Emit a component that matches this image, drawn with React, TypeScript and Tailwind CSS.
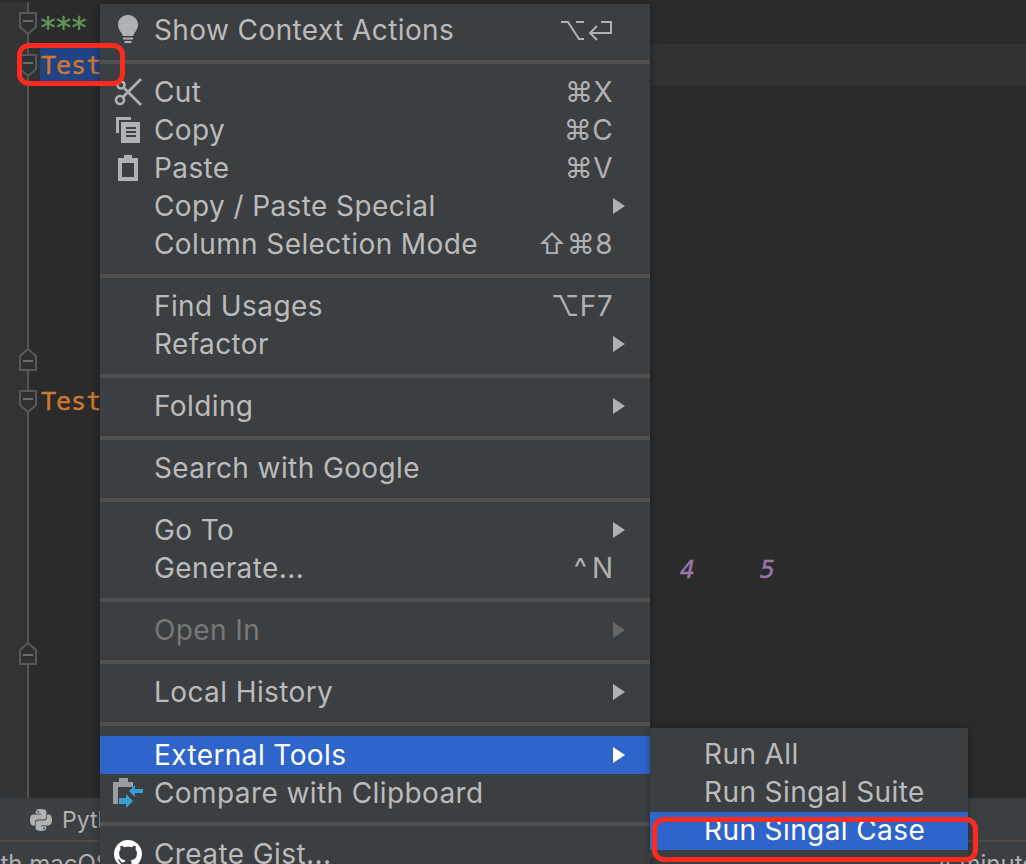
const sans = "font-['Inter','Noto_Sans',sans-serif]"

type Item = { label: string; icon?: React.ReactNode; shortcut?: React.ReactNode; sub?: boolean; active?: boolean; disabled?: boolean }

function Bulb() {
  return (
    <svg width="22" height="30" viewBox="0 0 22 30" fill="#afb1b3">
      <path d="M11 0C5 0 1 4.400 1 10c0 3.600 2 6 3.500 8 .8 1 1.200 2 1.200 3h10.600c0-1 .4-2 1.200-3 1.500-2 3.500-4.400 3.500-8C21 4.400 17 0 11 0z" />
      <rect x="6" y="22.500" width="10" height="2" />
      <rect x="7.500" y="26" width="7" height="2" />
    </svg>
  )
}

function Scissors() {
  return (
    <svg width="28" height="28" viewBox="0 0 28 28" fill="none" stroke="#afb1b3" strokeWidth="2.600">
      <circle cx="6" cy="22" r="4" />
      <circle cx="7" cy="7" r="3.500" />
      <path d="M9 19L27 1M10 10l17 17" />
    </svg>
  )
}

function CopyIcon() {
  return (
    <svg width="24" height="26" viewBox="0 0 24 26" fill="#afb1b3">
      <path d="M0 0h15v3H3v13H0z" />
      <path fillRule="evenodd" d="M5 5h19v21H5zM10 10v2h10v-2zM10 14v2h10v-2zM10 18v2h10v-2z" />
    </svg>
  )
}

function PasteIcon() {
  return (
    <svg width="20" height="26" viewBox="0 0 20 26" fill="#afb1b3">
      <path fillRule="evenodd" d="M0 3h6V0h8v3h6v23H0zM4 8v14h12V8z" />
    </svg>
  )
}

function CompareIcon() {
  return (
    <svg width="30" height="32" viewBox="0 0 30 32">
      <path fill="#9a9c9e" d="M0 5h6V1h9v4h5v5H5v17H0z" />
      <path fill="#389fd6" d="M30 12h-8V8l-6 6 6 6v-4h8z" />
      <path fill="#389fd6" d="M6 21h7v-4l7 7-7 7v-4H6z" />
    </svg>
  )
}

function Github() {
  return (
    <svg width="28" height="28" viewBox="0 0 16 16" fill="#ffffff">
      <path d="M8 0C3.580 0 0 3.580 0 8c0 3.540 2.290 6.530 5.470 7.590.4.070.55-.17.55-.38 0-.19-.01-.82-.01-1.490-2.010.37-2.530-.49-2.690-.94-.09-.23-.48-.94-.82-1.130-.28-.15-.68-.52-.01-.53.63-.01 1.080.58 1.230.82.720 1.210 1.870.870 2.330.660.070-.520.280-.870.510-1.070-1.780-.2-3.640-.890-3.640-3.950 0-.870.310-1.590.820-2.150-.080-.2-.360-1.020.080-2.120 0 0 .670-.210 2.200.820.640-.180 1.320-.270 2-.270s1.360.090 2 .270c1.530-1.040 2.200-.820 2.200-.820.440 1.100.160 1.920.080 2.120.510.560.820 1.270.820 2.150 0 3.070-1.870 3.750-3.650 3.950.290.250.540.730.540 1.480 0 1.070-.010 1.930-.010 2.200 0 .210.150.460.550.380A8.010 8.010 0 0016 8c0-4.420-3.580-8-8-8z" />
    </svg>
  )
}

function PythonIcon() {
  return (
    <svg width="22" height="22" viewBox="0 0 24 24" fill="#afb1b3">
      <path d="M11.900 0C6 0 6.300 2.600 6.300 2.600v2.700h5.700v.8H4S0 5.600 0 11.900c0 6.200 3.500 6 3.500 6h2v-2.900s-.1-3.500 3.400-3.500h5.700s3.300.1 3.300-3.200V3.200S18.400 0 11.900 0zM8.800 1.800a1 1 0 110 2.100 1 1 0 010-2.100z" />
      <path d="M12.100 24c5.900 0 5.600-2.600 5.600-2.600v-2.700H12v-.8h8s4 .5 4-5.800c0-6.200-3.500-6-3.500-6h-2v2.900s.1 3.500-3.400 3.500H9.400s-3.300-.1-3.300 3.200v5.100S5.600 24 12.100 24zm3.100-1.800a1 1 0 110-2.100 1 1 0 010 2.100z" />
    </svg>
  )
}

function OptionReturn() {
  return (
    <svg width="52" height="21" viewBox="0 0 52 21" fill="none" stroke="#afb1b3" strokeWidth="2">
      <path d="M0 2h7l11 17h5M15 2h8" />
      <path d="M40 2h10v11H29M36 6l-7 7 7 7" />
    </svg>
  )
}

function Arrow({ color = '#afb1b3' }: { color?: string }) {
  return (
    <svg width="12" height="16" viewBox="0 0 12 16" fill={color}>
      <path d="M0 0l12 8-12 8z" />
    </svg>
  )
}

function FoldMark({ up }: { up?: boolean }) {
  return (
    <svg width="18" height="23" viewBox="0 0 18 23" fill="#2f3032" stroke="#575859" strokeWidth="2" className="relative -mr-[10px]">
      {up ? <path d="M1 8l8-7 8 7v14H1z" /> : <path d="M1 1h16v14l-8 7-8-7z" />}
      <path d={up ? 'M4 13h10' : 'M4 9h10'} stroke="#6a6b6c" />
    </svg>
  )
}

function MenuRow({ label, icon, shortcut, sub, active, disabled }: Item) {
  const text = active ? 'text-white' : disabled ? 'text-[#777777]' : 'text-[#bbbbbb]'
  return (
    <div className={`flex h-[38px] items-center pr-[26px] ${active ? 'bg-[#2f65ca]' : ''} ${text}`}>
      <div className="flex w-[55px] shrink-0 justify-center pl-[1px]">{icon}</div>
      <span className="-ml-[1px] flex-1 whitespace-nowrap">{label}</span>
      {shortcut && <span className="mr-[11px] flex items-center whitespace-nowrap text-[#afb1b3]">{shortcut}</span>}
      {sub && (
        <span className="-mr-[1px]">
          <Arrow color={active ? '#ffffff' : disabled ? '#666666' : '#afb1b3'} />
        </span>
      )}
    </div>
  )
}

function Sep() {
  return <div className="mb-[9px] mt-[11px] h-[4px] bg-[#515151]" />
}

function EditorLine({ fold, current, children }: { fold?: 'up' | 'down'; current?: boolean; children?: React.ReactNode }) {
  return (
    <div className={`flex h-[42px] shrink-0 ${current ? 'bg-[#323232]' : ''}`}>
      <div className="flex w-[29px] shrink-0 items-center justify-end border-r-2 border-[#555555] bg-[#313335]">
        {fold && <FoldMark up={fold === 'up'} />}
      </div>
      <div className="flex flex-1 items-center pl-[11px] pt-[1px] font-['DejaVu_Sans_Mono',monospace] text-[25px] [-webkit-text-stroke:0.4px]">
        {children}
      </div>
    </div>
  )
}

export default function App() {
  const lines = Array.from({ length: 19 }, (_, i) => i + 1)
  return (
    <div className={`relative flex h-[864px] w-[1026px] flex-col overflow-hidden bg-[#2b2b2b] ${sans}`}>
      {/* Editor */}
      <div className="h-[798px] overflow-hidden pt-[2px]">
        {lines.map((n) => {
          if (n === 1)
            return (
              <EditorLine key={n} fold="down">
                <span className="-ml-[1px] translate-y-[4px] text-[30px] tracking-[-2.500px] text-[#629755]">***</span>
              </EditorLine>
            )
          if (n === 2)
            return (
              <EditorLine key={n} fold="down" current>
                <span className="bg-[#214283] px-[1px] text-[#cc7832]">Test</span>
              </EditorLine>
            )
          if (n === 9) return <EditorLine key={n} fold="up" />
          if (n === 10)
            return (
              <EditorLine key={n} fold="down">
                <span className="px-[1px] text-[#cc7832]">Test</span>
              </EditorLine>
            )
          if (n === 14)
            return (
              <EditorLine key={n}>
                <span className="ml-[640px] italic text-[#9876aa]">4</span>
                <span className="ml-[65px] italic text-[#9876aa]">5</span>
              </EditorLine>
            )
          if (n === 16) return <EditorLine key={n} fold="up" />
          return <EditorLine key={n} />
        })}
      </div>

      {/* Tool window bar */}
      <div className="flex h-[44px] shrink-0 items-center border-b-2 border-[#4d4a48] bg-[#3c3f41] pl-[30px] pt-[2px] text-[23px] text-[#afb1b3]">
        <PythonIcon />
        <span className="ml-[10px]">Python Console</span>
      </div>

      {/* Status bar */}
      <div className="flex flex-1 items-start overflow-hidden whitespace-nowrap bg-[#3c3f41] pt-[9px] text-[24px] leading-[26px] text-[#afb1b3]">
        <span className="-ml-[25px]">with macOS</span>
        <span className="ml-[826px]">4 minutes ago</span>
      </div>

      {/* Context menu */}
      <div className="absolute left-[100px] top-[4px] w-[550px] bg-[#3c3f41] pt-[7px] text-[28px] leading-[32px] tracking-[0.400px] shadow-[0_0_8px_rgba(0,0,0,0.35)]">
        <MenuRow label="Show Context Actions" icon={<Bulb />} shortcut={<OptionReturn />} />
        <Sep />
        <MenuRow label="Cut" icon={<Scissors />} shortcut="⌘X" />
        <MenuRow label="Copy" icon={<CopyIcon />} shortcut="⌘C" />
        <MenuRow label="Paste" icon={<PasteIcon />} shortcut="⌘V" />
        <MenuRow label="Copy / Paste Special" sub />
        <MenuRow label="Column Selection Mode" shortcut="⇧⌘8" />
        <Sep />
        <MenuRow label="Find Usages" shortcut="⌥F7" />
        <MenuRow label="Refactor" sub />
        <Sep />
        <MenuRow label="Folding" sub />
        <Sep />
        <MenuRow label="Search with Google" />
        <Sep />
        <MenuRow label="Go To" sub />
        <MenuRow label="Generate..." shortcut={<span className="-mr-[5px] tracking-[5px]">^N</span>} />
        <Sep />
        <MenuRow label="Open In" sub disabled />
        <Sep />
        <MenuRow label="Local History" sub />
        <div className="mb-[10px] mt-[11px] h-[4px] bg-[#515151]" />
        <MenuRow label="External Tools" sub active />
        <MenuRow label="Compare with Clipboard" icon={<CompareIcon />} />
        <div className="mb-[9px] mt-[10px] h-[4px] bg-[#515151]" />
        <MenuRow label="Create Gist..." icon={<Github />} />
      </div>

      {/* Submenu */}
      <div className="absolute left-[650px] top-[728px] w-[318px] bg-[#3c3f41] pb-[8px] pt-[8px] text-[28px] leading-[32px] tracking-[0.400px] shadow-[0_0_8px_rgba(0,0,0,0.35)]">
        {['Run All', 'Run Singal Suite', 'Run Singal Case'].map((label, i) => (
          <div key={label} className={`flex h-[38px] items-center pb-[2px] pl-[54px] ${i === 2 ? 'bg-[#2f65ca] text-white' : 'text-[#bbbbbb]'}`}>
            {label}
          </div>
        ))}
      </div>

      {/* Red annotation boxes */}
      <div className="absolute left-[17px] top-[43px] h-[43px] w-[108px] rounded-[12px] border-[5px] border-[#fc2b1f]" />
      <div className="absolute left-[652px] top-[817px] h-[45px] w-[326px] rounded-[12px] border-[5px] border-[#fc2b1f]" />
    </div>
  )
}
